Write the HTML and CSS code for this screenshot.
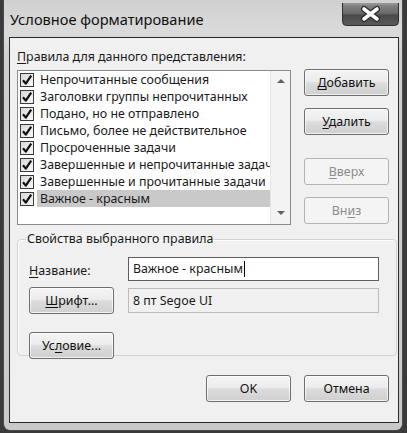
FILE: index.html
```html
<!DOCTYPE html>
<html lang="ru">
<head>
<meta charset="utf-8">
<title>Условное форматирование</title>
<link rel="stylesheet" href="styles.css">
</head>
<body>
<div class="window">
  <div class="titlebar">
    <span class="title">Условное форматирование</span>
    <button class="close" aria-label="Закрыть">
      <svg width="57" height="23" viewBox="0 0 57 23">
        <defs>
          <linearGradient id="cg" x1="0" y1="0" x2="0" y2="1">
            <stop offset="0" stop-color="#8a8a8a"/>
            <stop offset="0.45" stop-color="#6a6a6a"/>
            <stop offset="0.55" stop-color="#4a4a4a"/>
            <stop offset="1" stop-color="#5a5a5a"/>
          </linearGradient>
        </defs>
        <path d="M0.5 0 V18.5 Q0.5 22.5 4.5 22.5 H52.5 Q56.5 22.5 56.5 18.5 V0" fill="url(#cg)" stroke="#2e2e2e"/>
        <path d="M2 1 H55" stroke="#a0a0a0" stroke-width="1"/>
        <g stroke-linecap="round">
          <path d="M22 6 L35 16 M35 6 L22 16" stroke="#2a2a2a" stroke-width="6"/>
          <path d="M22 6 L35 16 M35 6 L22 16" stroke="#ffffff" stroke-width="3.6"/>
        </g>
      </svg>
    </button>
  </div>
  <div class="client">
    <div class="caption"><u>П</u>равила для данного представления:</div>
    <div class="toprow">
      <div class="listbox">
        <ul class="items">
          <li class="item"><span class="chk"></span><span class="lbl">Непрочитанные сообщения</span></li>
          <li class="item"><span class="chk"></span><span class="lbl">Заголовки группы непрочитанных</span></li>
          <li class="item"><span class="chk"></span><span class="lbl">Подано, но не отправлено</span></li>
          <li class="item"><span class="chk"></span><span class="lbl">Письмо, более не действительное</span></li>
          <li class="item"><span class="chk"></span><span class="lbl">Просроченные задачи</span></li>
          <li class="item"><span class="chk"></span><span class="lbl">Завершенные и непрочитанные задачи</span></li>
          <li class="item"><span class="chk"></span><span class="lbl">Завершенные и прочитанные задачи</span></li>
          <li class="item selected"><span class="chk"></span><span class="lbl">Важное - красным</span></li>
        </ul>
        <div class="scrollbar">
          <span class="arrow up"></span>
          <span class="arrow down"></span>
        </div>
      </div>
      <div class="sidebtns">
        <button class="btn"><u>Д</u>обавить</button>
        <button class="btn"><u>У</u>далить</button>
        <button class="btn disabled gap-big"><u>В</u>верх</button>
        <button class="btn disabled">Вн<u>и</u>з</button>
      </div>
    </div>
    <fieldset class="group">
      <legend class="legend">Свойства выбранного правила</legend>
      <div class="props">
        <span class="plabel"><u>Н</u>азвание:</span>
        <div class="textbox">Важное - красным<span class="caret"></span></div>
        <button class="btn"><u>Ш</u>рифт...</button>
        <div class="fontbox">8 пт Segoe UI</div>
        <button class="btn cond">Ус<u>л</u>овие...</button>
      </div>
    </fieldset>
    <div class="footer">
      <button class="btn ok">OK</button>
      <button class="btn">Отмена</button>
    </div>
  </div>
</div>
</body>
</html>
```

FILE: styles.css
```css
* { box-sizing: border-box; }

html, body {
  margin: 0;
  padding: 0;
}

body {
  width: 407px;
  height: 433px;
  overflow: hidden;
  background: #3a3a3a;
  font-family: "Noto Sans", "Open Sans", sans-serif;
  font-size: 12.4px;
  color: #1a1a1a;
}

u { text-decoration: underline; text-underline-offset: 2px; }

.window {
  margin-left: 3px;
  width: 400px;
  height: 431px;
  background: linear-gradient(180deg, #d0d0d0 0%, #dadada 30px, #cfcfcf 60px, #c9c9c9 100%);
  border: 1px solid #4a4a4a;
  border-top: none;
  border-radius: 0 0 7px 7px;
  padding: 0 3px 0 5px;
  display: flex;
  flex-direction: column;
}

.titlebar {
  height: 37px;
  display: flex;
  align-items: flex-start;
  justify-content: space-between;
  padding-left: 1px;
}

.title {
  font-size: 14.6px;
  color: #111;
  margin-top: 9px;
}

.close {
  border: none;
  padding: 0;
  margin: 3px 0 0 0;
  background: none;
  width: 57px;
  height: 23px;
  display: block;
}
.close svg { display: block; }

.client {
  width: 390px;
  height: 386px;
  border: 1px solid #2b2b2b;
  background: #f0f0f0;
  padding: 9px 1px 0 7px;
  display: flex;
  flex-direction: column;
}

.caption {
  height: 20px;
  line-height: 20px;
  margin-bottom: 3px;
  white-space: nowrap;
}

.toprow {
  display: flex;
  gap: 13px;
  padding-right: 8px;
  align-items: flex-start;
}

.listbox {
  width: 274px;
  height: 155px;
  border: 1px solid #8a8a8a;
  background: #fff;
  display: flex;
  overflow: hidden;
}

.items {
  list-style: none;
  margin: 0;
  padding: 0;
  flex: 1;
  min-width: 0;
}

.item {
  height: 17px;
  display: flex;
  align-items: center;
  padding-left: 2px;
}

.chk {
  width: 14px;
  height: 14px;
  flex: none;
  border: 1px solid #3a3a3a;
  background:
    url("data:image/svg+xml;utf8,<svg xmlns='http://www.w3.org/2000/svg' width='12' height='12' viewBox='0 0 12 12'><path d='M2 6.2 L4.8 9.6 L10.2 1.6' fill='none' stroke='%23111' stroke-width='2.2' stroke-linejoin='round'/></svg>") center/12px 12px no-repeat,
    linear-gradient(135deg, #d8d8d8, #f8f8f8);
  margin-right: 3px;
}

.lbl {
  flex: 1;
  height: 17px;
  line-height: 17px;
  padding-left: 3px;
  white-space: nowrap;
  overflow: hidden;
}

.selected .lbl {
  background: #c9c9c9;
}

.scrollbar {
  width: 20px;
  flex: none;
  background: #f3f3f3;
  border-left: 1px solid #e4e4e4;
  display: flex;
  flex-direction: column;
  justify-content: space-between;
  align-items: center;
  padding: 8px 0 9px;
}

.arrow {
  width: 0;
  height: 0;
  border-left: 4px solid transparent;
  border-right: 4px solid transparent;
}
.arrow.up { border-bottom: 4px solid #606060; }
.arrow.down { border-top: 4px solid #606060; }

.sidebtns {
  width: 85px;
  display: flex;
  flex-direction: column;
  gap: 12px;
  margin-top: -1px;
}

.btn {
  font: inherit;
  color: #111;
  width: 85px;
  height: 27px;
  padding: 0;
  border: 1px solid #6e6e6e;
  border-radius: 3px;
  background: linear-gradient(180deg, #f4f4f4 0%, #ececec 45%, #dcdcdc 52%, #cfcfcf 100%);
  box-shadow: inset 0 0 0 1px rgba(255,255,255,0.7);
  line-height: 24px;
  white-space: nowrap;
}

.btn.disabled {
  color: #8c8c8c;
  border-color: #b4b4b4;
  background: #f4f4f4;
  box-shadow: none;
}

.gap-big { margin-top: 11px; }

.group {
  margin: 4px 0 0 0;
  padding: 8px 0 8px 11px;
  width: 380px;
  border: 1px solid #d4d4d4;
  border-radius: 4px;
  box-shadow: inset 1px 1px 0 #fff;
}

.legend {
  padding: 0 1px;
  margin-left: -3px;
  line-height: 20px;
  height: 20px;
  white-space: nowrap;
}

.props {
  display: grid;
  grid-template-columns: 85px 251px;
  column-gap: 14px;
  grid-template-rows: 24px 27px 27px;
  row-gap: 6px;
  align-items: center;
}

.plabel {
  line-height: 24px;
  margin-top: 3px;
}

.textbox {
  height: 24px;
  border: 1px solid #5e5e5e;
  background: #fff;
  line-height: 22px;
  padding-left: 4px;
  white-space: nowrap;
  display: flex;
  align-items: center;
}

.caret {
  display: inline-block;
  width: 1px;
  height: 16px;
  background: #000;
  margin-left: 1px;
}

.fontbox {
  height: 25px;
  border: 1px solid #bcbcbc;
  background: #f0f0f0;
  line-height: 23px;
  padding-left: 4px;
  white-space: nowrap;
}

.cond {
  grid-column: 1;
  margin-top: 12px;
}

.props .btn { align-self: start; }

.footer {
  display: flex;
  justify-content: flex-end;
  gap: 13px;
  padding-right: 8px;
  margin-top: 19px;
}

.ok { width: 85px; }
```
